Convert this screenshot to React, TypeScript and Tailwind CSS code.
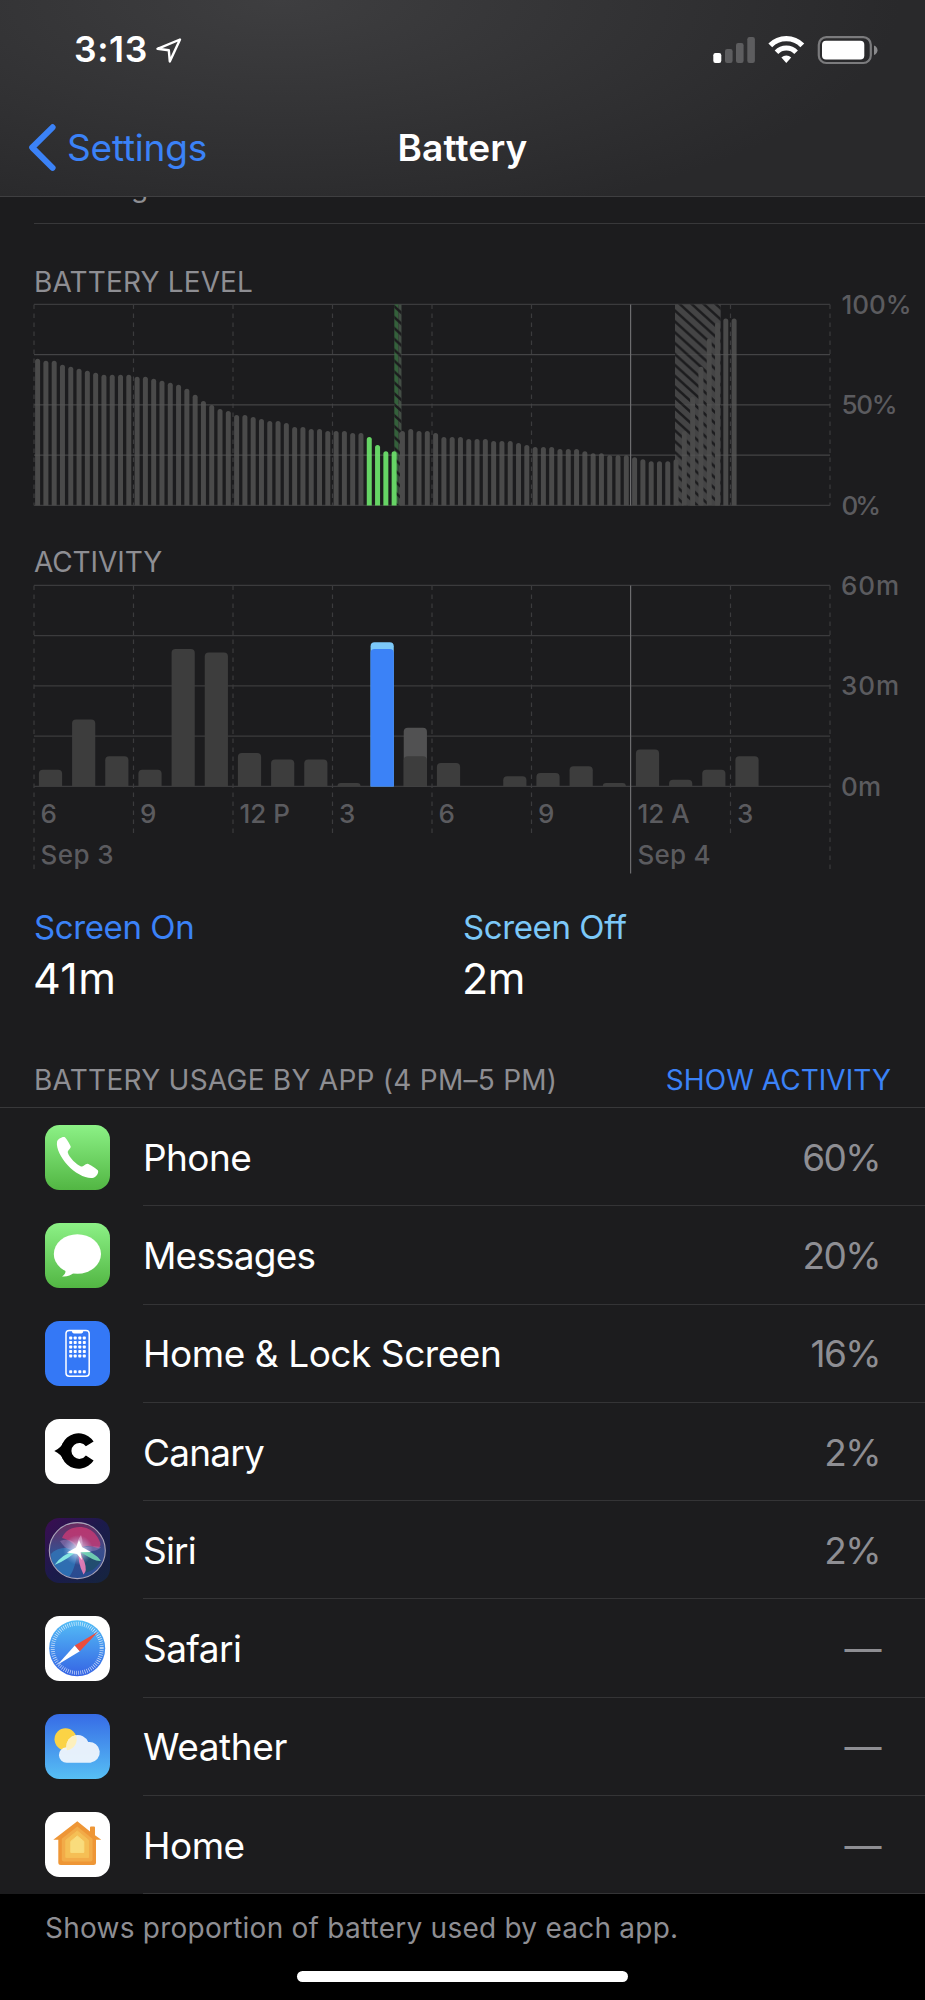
import type { ReactNode } from 'react';

const levels = [
  73, 72, 72, 70, 69, 68, 67, 66, 65, 65, 65, 65, 64, 64, 63, 62, 61, 60, 58, 55, 52, 50, 48, 47,
  45, 45, 44, 43, 42, 42, 41, 39, 39, 38, 38, 37, 37, 37, 36, 36, 34, 30, 27, 27, 37, 38, 37, 37,
  36, 34, 34, 34, 33, 33, 33, 32, 32, 32, 31, 30, 29, 29, 29, 28, 28, 28, 27, 26, 26, 25, 25, 25,
  24, 23, 22, 22, 22, 23, 37, 54, 69, 83, 91, 93, 93,
];

// minutes per hour: [screen on, screen off]
const activity = [
  [5, 0], [20, 0], [9, 0], [5, 0], [41, 0], [40, 0], [10, 0], [8, 0], [8, 0], [1, 0], [41, 2],
  [9, 8.5], [7, 0], [0, 0], [3, 0], [4, 0], [6, 0], [1, 0], [11, 0], [2, 0], [5, 0], [9, 0],
];

const SELECTED_HOUR = 10;
const LEFT = 34;
const WIDTH = 796;
const HEIGHT = 201;
const STEP = WIDTH / 8;
const hours = ['6', '9', '12 P', '3', '6', '9', '12 A', '3'];

function barPath(x: number, width: number, height: number, bottom: number, radius: number) {
  const r = Math.min(radius, height);
  const top = bottom - height;
  return `M${x} ${bottom}V${top + r}Q${x} ${top} ${x + r} ${top}H${x + width - r}Q${x + width} ${top} ${x + width} ${top + r}V${bottom}Z`;
}

function Grid({ top, tail = 0, dayTail = 0 }: { top: number; tail?: number; dayTail?: number }) {
  return (
    <g stroke="#3b3b3d" strokeWidth="1.2">
      {[0, 1, 2, 3, 4].map((i) => (
        <line key={i} x1={LEFT} x2={LEFT + WIDTH} y1={top + (HEIGHT / 4) * i} y2={top + (HEIGHT / 4) * i} />
      ))}
      {[0, 1, 2, 3, 4, 5, 7, 8].map((i) => (
        <line
          key={i}
          x1={LEFT + STEP * i}
          x2={LEFT + STEP * i}
          y1={top}
          y2={top + HEIGHT + (i % 8 === 0 ? dayTail : tail)}
          strokeDasharray="4.5 4.5"
        />
      ))}
    </g>
  );
}

function LevelChart() {
  const top = 7.4;
  const bottom = top + HEIGHT;
  return (
    <svg className="block overflow-visible" width="925" height="216" viewBox="0 0 925 216">
      <defs>
        <pattern id="hatch" width="12" height="10.9" patternUnits="userSpaceOnUse">
          <path d="M-12 -10.9L24 21.8M-12 0L12 21.8M0 -10.9L24 10.9" stroke="#1c1c1e" strokeWidth="2.5" />
        </pattern>
      </defs>
      <Grid top={top} />
      <rect x="675" y={top} width="45.7" height={HEIGHT} fill="#444445" />
      <rect x="675" y={top} width="45.7" height={HEIGHT} fill="url(#hatch)" />
      <rect x="394.3" y={top} width="4.2" height={HEIGHT} fill="#34603b" />
      <rect x="398.5" y={top} width="3" height={HEIGHT} fill="#434d45" />
      <rect x="394.3" y={top} width="7.2" height={HEIGHT} fill="url(#hatch)" />
      {levels.map((level, i) => (
        <path
          key={i}
          d={barPath(LEFT + 1.1 + (STEP / 12) * i, 5, level * 2.01, bottom, 2.5)}
          fill={i >= 40 && i < 44 ? '#66d465' : '#4a4a4a'}
        />
      ))}
      <g stroke="#ffffff" strokeOpacity="0.06">
        <path d={`M34 ${top + 50.25}H830M34 ${top + 100.5}H830M34 ${top + 150.75}H830`} />
      </g>
      <line x1="630.6" x2="630.6" y1={top} y2={bottom} stroke="#6c6c6e" strokeWidth="1.2" />
      <g className="fill-[#5b5b5f] text-[26px] font-medium">
        <text x="841.5" y="16.5" textLength="70">100%</text>
        <text x="841.5" y="117" textLength="56">50%</text>
        <text x="841.5" y="217.5" textLength="39.5">0%</text>
      </g>
    </svg>
  );
}

function ActivityChart() {
  const top = 10.4;
  const bottom = top + HEIGHT;
  return (
    <svg className="block overflow-visible" width="925" height="300" viewBox="0 0 925 300">
      <Grid top={top} tail={50} dayTail={87} />
      {activity.map(([on, off], i) => {
        const x = LEFT + 4.9 + (STEP / 3) * i;
        const selected = i === SELECTED_HOUR;
        return (
          <g key={i}>
            {off > 0 && (
              <path d={barPath(x, 23.2, (on + off) * 3.35, bottom, 4)} fill={selected ? '#7cc8f8' : '#515152'} />
            )}
            {on > 0 && <path d={barPath(x, 23.2, on * 3.35, bottom, 4)} fill={selected ? '#3b82f7' : '#3d3d3d'} />}
          </g>
        );
      })}
      <line x1="630.6" x2="630.6" y1={top} y2={bottom + 87} stroke="#6c6c6e" strokeWidth="1.2" />
      <g className="fill-[#5b5b5f] text-[26px] font-medium">
        <text x="841" y="19.5" textLength="58">60m</text>
        <text x="841" y="120" textLength="58">30m</text>
        <text x="841" y="220.5" textLength="40">0m</text>
        {hours.map((hour, i) => (
          <text key={i} x={LEFT + STEP * i + 6.5} y="248">
            {hour}
          </text>
        ))}
        <text x="40.5" y="288.5" textLength="73">Sep 3</text>
        <text x="637.5" y="288.5" textLength="73">Sep 4</text>
      </g>
    </svg>
  );
}

function PhoneIcon() {
  return (
    <>
      <rect width="65" height="65" rx="14.5" fill="url(#green)" />
      <path
        fill="#fff"
        d="M12 17C12.5 14 17 11.5 19.5 12C21 12.5 25 19.5 25.7 21.5C26 23.5 22.3 25.5 22.8 27.5C24 32.5 31.5 39.5 36 41.5C38 42.3 40 38.7 42.5 38.8C44.5 39.2 51 43.5 52.8 45.3C54.3 47.2 51.5 52 48.5 52.8C42 54.5 30 48.5 22.5 40C16 32.5 11 23.5 12 17Z"
      />
    </>
  );
}

function MessagesIcon() {
  return (
    <>
      <rect width="65" height="65" rx="14.5" fill="url(#green)" />
      <ellipse cx="32.4" cy="31" rx="23.6" ry="19.7" fill="#fff" />
      <path d="M20 46C21.5 49.5 19.5 52.3 17 53.4C21.5 54 26 52.3 29 49.5Z" fill="#fff" />
    </>
  );
}

function LockScreenIcon() {
  return (
    <>
      <rect width="65" height="65" rx="14.5" fill="#3478f6" />
      <rect x="21" y="9.4" width="23.2" height="45.8" rx="3.2" fill="none" stroke="#fff" strokeWidth="1.5" />
      <path d="M27 9h11.2v1.6q0 1.8-1.8 1.8h-7.6q-1.8 0-1.8-1.8z" fill="#fff" />
      {[17, 21.5, 26, 30.5, 35, 50.7].map((y) =>
        [25.7, 30.2, 34.8, 39.3].map((x) => (
          <rect key={`${x}-${y}`} x={x - 1.5} y={y - 1.5} width="3" height="3" rx="0.7" fill="#fff" />
        )),
      )}
    </>
  );
}

function CanaryIcon() {
  return (
    <>
      <rect width="65" height="65" rx="14.5" fill="#fff" />
      <path d="M48.6 22.6A17.7 17.7 0 1 0 48.6 41.4L40.9 36.6A8 8 0 1 1 40.9 27.2Z" />
      <path d="M9.3 32Q16 29 18.5 23V41Q16 35 9.3 32Z" />
    </>
  );
}

function SiriIcon() {
  return (
    <>
      <rect width="65" height="65" rx="14.5" fill="url(#siriBg)" />
      <circle cx="32.3" cy="32.6" r="28" fill="url(#siriOrb)" />
      <path d="M17 20C22 7 42 5 51 17C56 24 57 28 53 30C44 27 38 27 33 32C29 25 24 22 17 20Z" fill="#d23a74" opacity="0.75" />
      <path d="M6 36C12 29 24 29 33 32C31 43 29 53 24 59C12 55 6 46 6 36Z" fill="#2e86c8" opacity="0.6" />
      <path d="M34 32C43 34 51 39 56 43C51 51 45 54 39 55C38 46 36 39 34 32Z" fill="#1d4f62" opacity="0.7" />
      <path d="M15 23C25 19 32 25 33 32C38 29 47 27 56 29C54 33 42 35 34 32C25 33 20 31 15 23Z" fill="#c79ad8" opacity="0.35" />
      <path d="M36 17Q39 25 36 32H32Q31 24 36 17Z" fill="#e8a3c8" opacity="0.65" />
      <circle cx="33" cy="32" r="15" fill="url(#siriGlow)" />
      <path d="M34 32Q32 44 38.5 56.5Q42.5 53 39.5 44Z" fill="#ee7fb8" opacity="0.9" />
      <path d="M9.5 47Q17 36 34 31Q24 41 9.5 47Z" fill="#86e6e2" />
      <path d="M34 31Q49 33 56 43Q50 44 34 33Z" fill="#74d7b6" opacity="0.9" />
      <path d="M22 34.5L31 29.5L34 22L37 29L46 34L35.5 34.2L37 42L32 36Z" fill="#fff" />
      <circle cx="32.3" cy="32.6" r="28" fill="none" stroke="#a9a3b8" strokeWidth="1.1" />
    </>
  );
}

function SafariIcon() {
  return (
    <>
      <rect width="65" height="65" rx="14.5" fill="#fff" />
      <circle cx="32.2" cy="32.3" r="28" fill="url(#safari)" />
      <circle cx="32.2" cy="32.3" r="24.5" fill="none" stroke="#fff" strokeOpacity="0.75" strokeWidth="4" strokeDasharray="0.7 1.438" />
      <path d="M12.5 48.8L29.8 29.4L34.8 35.2Z" fill="#fff" />
      <path d="M53 15.7L29.8 29.4L34.8 35.2Z" fill="#eb4e3d" />
    </>
  );
}

function WeatherIcon() {
  return (
    <>
      <rect width="65" height="65" rx="14.5" fill="url(#weather)" />
      <circle cx="20.5" cy="25.3" r="11" fill="#fbd345" />
      <path
        d="M22 48.7A7.7 7.7 0 0 1 21.3 33.2A11.4 11.4 0 0 1 43.2 28A10.4 10.4 0 1 1 45.5 48.7Z"
        fill="#f0f5fc"
        fillOpacity="0.94"
      />
      <path d="M21.3 33.2A11.4 11.4 0 0 1 30.9 21.2A11 11 0 0 1 22 36.2Z" fill="#fdf0bd" />
    </>
  );
}

function HomeIcon() {
  return (
    <>
      <rect width="65" height="65" rx="14.5" fill="#fff" />
      <path
        d="M32.3 9.2L45 19.4V15.5Q45 14.4 46 14.4H49Q50 14.4 50 15.5V23.2L56.3 27.8H51V50.5Q51 53 48.5 53H15.8Q13.3 53 13.3 50.5V27.8H8.3Z"
        fill="#ee9636"
      />
      <path d="M32.3 14.5L47.5 26.7V47.5Q47.5 49.5 45.5 49.5H18.8Q16.8 49.5 16.8 47.5V26.7Z" fill="#f2ab48" />
      <path d="M32.3 19L43.6 28.2V45.4H20.8V28.2Z" fill="#f5bf55" stroke="#f5bf55" strokeLinejoin="round" />
      <path d="M32.3 24L38.8 29.4V40.4H25.8V29.4Z" fill="#f9dc7c" stroke="#f9dc7c" strokeLinejoin="round" />
    </>
  );
}

const apps: { name: string; usage: string; tracking: string; icon: ReactNode }[] = [
  { name: 'Phone', usage: '60%', tracking: 'tracking-[-0.6px]', icon: <PhoneIcon /> },
  { name: 'Messages', usage: '20%', tracking: 'tracking-[-0.8px]', icon: <MessagesIcon /> },
  { name: 'Home & Lock Screen', usage: '16%', tracking: 'tracking-[-0.45px]', icon: <LockScreenIcon /> },
  { name: 'Canary', usage: '2%', tracking: 'tracking-[-0.8px]', icon: <CanaryIcon /> },
  { name: 'Siri', usage: '2%', tracking: 'tracking-[-0.8px]', icon: <SiriIcon /> },
  { name: 'Safari', usage: '—', tracking: 'tracking-[-0.6px]', icon: <SafariIcon /> },
  { name: 'Weather', usage: '—', tracking: 'tracking-[-0.4px]', icon: <WeatherIcon /> },
  { name: 'Home', usage: '—', tracking: 'tracking-[-0.5px]', icon: <HomeIcon /> },
];

function Gradients() {
  return (
    <svg className="absolute h-0 w-0">
      <defs>
        <linearGradient id="green" x2="0" y2="1">
          <stop stopColor="#8cf186" />
          <stop offset="1" stopColor="#52b643" />
        </linearGradient>
        <linearGradient id="siriBg" x2="1" y2="1">
          <stop stopColor="#3b0d52" />
          <stop offset="0.5" stopColor="#1b1b4b" />
          <stop offset="1" stopColor="#15253f" />
        </linearGradient>
        <linearGradient id="siriOrb" x2="0" y2="1">
          <stop stopColor="#6c2a5e" />
          <stop offset="0.5" stopColor="#394d8d" />
          <stop offset="1" stopColor="#274b91" />
        </linearGradient>
        <radialGradient id="siriGlow">
          <stop stopColor="#fff" stopOpacity="0.9" />
          <stop offset="1" stopColor="#a8c8ff" stopOpacity="0" />
        </radialGradient>
        <linearGradient id="safari" x2="0" y2="1">
          <stop stopColor="#54bef6" />
          <stop offset="1" stopColor="#3563e4" />
        </linearGradient>
        <linearGradient id="weather" x2="0" y2="1">
          <stop stopColor="#366be6" />
          <stop offset="1" stopColor="#57bff4" />
        </linearGradient>
      </defs>
    </svg>
  );
}

function StatusBar() {
  return (
    <div className="flex h-[100px] items-center justify-between pl-[74px] pr-[46px]">
      <div className="flex items-center gap-[7px]">
        <span className="text-[35.5px] leading-none font-semibold tracking-[0.6px]">3:13</span>
        <svg width="27" height="27" viewBox="0 0 27 27" fill="none" stroke="#fff" strokeWidth="2.4" strokeLinejoin="round">
          <path d="M25 2.5L2.5 11.8L13.8 13.2L14.8 24.5Z" />
        </svg>
      </div>
      <svg width="166" height="30" viewBox="0 0 166 30">
        <g fill="#5d5d5f">
          <rect x="0.3" y="18" width="8" height="10" rx="2.2" fill="#fff" />
          <rect x="12" y="14" width="7.6" height="14" rx="2.2" />
          <rect x="23" y="8" width="7.6" height="20" rx="2.2" />
          <rect x="34.3" y="2" width="7.6" height="26" rx="2.2" />
        </g>
        <g fill="none" stroke="#fff">
          <path d="M57.3 10.3A22.4 22.4 0 0 1 89.3 10.3" strokeWidth="5.4" />
          <path d="M63.5 17.2A13.6 13.6 0 0 1 83.1 17.2" strokeWidth="5" />
        </g>
        <path d="M68.4 22.5A7.2 7.2 0 0 1 78.2 22.5L73.3 28Z" fill="#fff" />
        <rect x="105.8" y="2.2" width="52" height="25.8" rx="7.5" fill="none" stroke="#7b7b7d" strokeWidth="2.2" />
        <rect x="109" y="5.8" width="42.3" height="18.8" rx="4" fill="#fff" />
        <path d="M161 10.5Q164.5 12 164.5 15.2T161 20Z" fill="#8a8a8c" />
      </svg>
    </div>
  );
}

function NavBar() {
  return (
    <div className="grid h-[94px] grid-cols-3 items-center leading-none">
      <button className="flex items-center gap-[11px] pl-[28px] text-[#3b82f7]">
        <svg width="28" height="48" viewBox="0 0 28 48" fill="none" stroke="currentColor" strokeWidth="6" strokeLinecap="round" strokeLinejoin="round">
          <path d="M24.6 4.3L4.2 24.5L24.6 44.8" />
        </svg>
        <span className="text-[37px] leading-none tracking-[-0.2px]">Settings</span>
      </button>
      <h1 className="text-center text-[37px] leading-none font-semibold tracking-[0.1px]">Battery</h1>
    </div>
  );
}

export default function App() {
  return (
    <div className="flex h-[2000px] w-[925px] flex-col overflow-hidden bg-[#1c1c1e] font-['Inter',sans-serif] text-white">
      <Gradients />
      <header className="h-[197px] shrink-0 border-b border-[#3f3f41] bg-[radial-gradient(ellipse_620px_230px_at_280px_0px,#3e3e40,#29292b)]">
        <StatusBar />
        <NavBar />
      </header>

      <div className="ml-[34px] h-[27px] shrink-0 overflow-hidden border-b border-[#38383a]">
        <p className="-mt-[25px] pl-[97px] text-[28px] leading-[30px] text-[#8e8e93]">g</p>
      </div>

      <section className="shrink-0">
        <h2 className="flex h-[73px] items-end pl-[34px] text-[28px] leading-[30px] tracking-[0.15px] text-[#8e8e93]">
          BATTERY LEVEL
        </h2>
        <LevelChart />
      </section>

      <section className="shrink-0">
        <h2 className="flex h-[62px] items-end pl-[34px] text-[28px] leading-[25px] tracking-[-0.1px] text-[#8e8e93]">
          ACTIVITY
        </h2>
        <ActivityChart />
      </section>

      <section className="grid h-[178px] shrink-0 grid-cols-[429px_1fr] pt-[32px] pl-[34px]">
        <div>
          <p className="text-[33px] leading-[40px] tracking-[-0.4px] text-[#3b82f7]">Screen On</p>
          <p className="mt-[5px] -ml-px text-[43px] leading-[52px] tracking-[0.4px]">41m</p>
        </div>
        <div>
          <p className="text-[33px] leading-[40px] tracking-[-0.4px] text-[#7cc8f8]">Screen Off</p>
          <p className="mt-[5px] -ml-px text-[43px] leading-[52px] tracking-[-0.4px]">2m</p>
        </div>
      </section>

      <div className="flex h-[55px] shrink-0 items-center justify-between border-b border-[#38383a] pr-[34px] pl-[34px] text-[28px]">
        <h2 className="tracking-[0.26px] text-[#8e8e93]">BATTERY USAGE BY APP (4 PM–5 PM)</h2>
        <button className="tracking-[0.05px] text-[#3b82f7]">SHOW ACTIVITY</button>
      </div>

      <ul className="flex h-[786px] shrink-0 flex-col">
        {apps.map((app) => (
          <li key={app.name} className="flex flex-1 items-center pl-[45px] text-[37px]">
            <svg className="shrink-0" width="65" height="65" viewBox="0 0 65 65">
              {app.icon}
            </svg>
            <div className="ml-[33px] flex h-full flex-1 items-center justify-between border-b border-[#343436] pt-[2px] pr-[45px]">
              <span className={app.tracking}>{app.name}</span>
              <span className="tracking-[-1.6px] text-[#8e8e93]">{app.usage}</span>
            </div>
          </li>
        ))}
      </ul>

      <footer className="flex flex-1 flex-col items-center bg-black">
        <p className="mt-[17px] w-full pl-[45px] text-[28px] leading-[34px] tracking-[0.24px] text-[#8e8e93]">
          Shows proportion of battery used by each app.
        </p>
        <div className="mt-[26px] h-[11px] w-[331px] rounded-full bg-white" />
      </footer>
    </div>
  );
}
